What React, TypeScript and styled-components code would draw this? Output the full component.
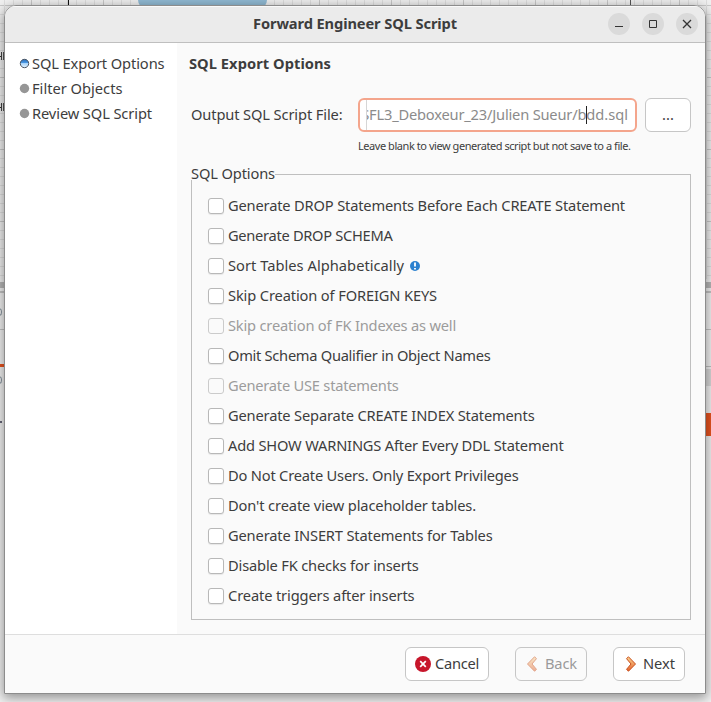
import React, { useLayoutEffect, useRef, useState } from 'react';
import styled, { createGlobalStyle, css } from 'styled-components';

const GlobalStyle = createGlobalStyle`
  * { box-sizing: border-box; }
  html, body { margin: 0; overflow: hidden; }
  body { font: 14.67px/20px "Noto Sans", "Open Sans", sans-serif; color: #3d3d3d; }
  button, input { font: inherit; color: inherit; }
`;

const Desktop = styled.div`
  position: relative;
  width: 711px;
  height: 702px;
  padding: 5px 5px 8px 4px;
  overflow: hidden;
  background:
    linear-gradient(#f2f2f2, #f2f2f2) 0 279px / 100% 423px no-repeat,
    repeating-linear-gradient(90deg, transparent 0 31px, #c9c9c9 31px 32px, transparent 32px 72px),
    repeating-linear-gradient(90deg, transparent 0 4px, #dedede 4px 5px, transparent 5px 9px),
    repeating-linear-gradient(transparent 0 5px, #c9c9c9 5px 6px, transparent 6px 72px),
    repeating-linear-gradient(transparent 0 5px, #dedede 5px 6px, transparent 6px 9px),
    #f0f0f0;
`;

/* Pieces of the diagram editor that show around the dialog. */
const Fragment = styled.div<{ $x: number; $y: number; $w: number; $h: number; $c: string }>`
  position: absolute;
  left: ${p => p.$x}px;
  top: ${p => p.$y}px;
  width: ${p => p.$w}px;
  height: ${p => p.$h}px;
  background: ${p => p.$c};
`;

const TableTop = styled.div`
  position: absolute;
  left: 138px;
  top: -9px;
  width: 129px;
  height: 18px;
  border-radius: 9px;
  background: #91bad4;
`;

const Arc = styled.div<{ $y: number }>`
  position: absolute;
  left: -4px;
  top: ${p => p.$y}px;
  width: 6px;
  height: 8px;
  border: 1.5px solid #83909b;
  border-radius: 50%;
`;

const Dialog = styled.div`
  width: 702px;
  height: 689px;
  display: flex;
  flex-direction: column;
  border: 1px solid #8c8c8c;
  border-radius: 12px 12px 0 0;
  background: #fafafa;
  overflow: hidden;
`;

const DialogShadow = styled.div`
  position: relative;
  border-radius: 12px 12px 0 0;
  box-shadow: 0 3px 12px 1px rgba(0, 0, 0, 0.4);
  width: 702px;
`;

const TitleBar = styled.header`
  flex: none;
  height: 37px;
  display: grid;
  grid-template-columns: 1fr auto 1fr;
  align-items: center;
  border-bottom: 1px solid #bfbfbf;
  box-shadow: inset 0 1px #fafafa;
  background: #ebebeb;
  font-weight: 700;
`;

const WindowControls = styled.div`
  display: flex;
  justify-content: flex-end;
  gap: 12px;
  padding-right: 7px;
`;

const ControlButton = styled.button`
  width: 22px;
  height: 22px;
  padding: 0;
  border: 0;
  border-radius: 50%;
  background: #dadada;
  svg { display: block; }
`;

const Body = styled.div`
  flex: none;
  height: 591px;
  display: flex;
`;

const Steps = styled.nav`
  width: 172px;
  padding: 8px 0 0 14px;
  background: #fff;
`;

const Step = styled.div`
  height: 25px;
  display: flex;
  align-items: center;
  gap: 2px;
  svg { flex: none; }
`;

const Page = styled.main`
  flex: 1;
  padding: 10px 14px 0 12px;
`;

const PageTitle = styled.h1`
  margin: 0;
  height: 20px;
  font-size: inherit;
  font-weight: 700;
`;

const FileRow = styled.div`
  display: flex;
  align-items: center;
  height: 34px;
  margin-top: 25px;
  padding-left: 2px;
`;

const FileLabel = styled.label`
  width: 167px;
`;

const Entry = styled.div`
  width: 279px;
  height: 34px;
  display: flex;
  align-items: center;
  border: 2px solid #f4a58c;
  border-radius: 6px;
  padding: 0 7px 0 6px;
  background: #fff;
  color: #8b8b8b;
`;

const EntryView = styled.div`
  flex: 1;
  height: 30px;
  display: flex;
  align-items: center;
  justify-content: flex-end;
  border-left: 1px solid #d6d6d6;
  overflow: hidden;
`;

const Caret = styled.i`
  flex: none;
  width: 1px;
  height: 18px;
  margin-right: -1px;
  background: #222;
`;

const Button = styled.button<{ $w: number; $off?: boolean }>`
  width: ${p => p.$w}px;
  height: 34px;
  display: flex;
  align-items: center;
  justify-content: center;
  padding: 0;
  border: 1px solid #c6c6c6;
  border-radius: 6px;
  background: ${p => (p.$off ? '#fafafa' : '#fff')};
  color: ${p => (p.$off ? '#9a9a9a' : '#3d3d3d')};
`;

const BrowseSlot = styled.div`
  margin-left: 8px;
`;

const Hint = styled.div`
  height: 16px;
  margin: 6px 0 0 169px;
  font-size: 11px;
  line-height: 16px;
`;

const Group = styled.section`
  margin: 20px 0 0 2px;
  width: 500px;
  height: 446px;
  border: 1px solid #bfbfbf;
`;

const Legend = styled.div`
  width: 84px;
  height: 16px;
  margin: -11px 0 0 -1px;
  line-height: 18px;
  background: #fafafa;
`;

const Options = styled.div`
  padding: 11px 0 0 16px;
`;

const Option = styled.label<{ $off?: boolean }>`
  height: 30px;
  display: flex;
  align-items: center;
  gap: 4px;
  color: ${p => (p.$off ? '#9c9c9c' : '#3d3d3d')};
`;

const Box = styled.span<{ $off?: boolean }>`
  width: 16px;
  height: 16px;
  border: 1px solid #b8b8b8;
  border-radius: 3px;
  background: #fff;
  box-shadow: 0 1px 1px rgba(0, 0, 0, 0.08);
  ${p => p.$off && css`
    border-color: #cbcbcb;
    background: #fafafa;
    box-shadow: none;
  `}
`;

const InfoSlot = styled.span`
  display: flex;
  margin-left: 2px;
`;

const Footer = styled.footer`
  flex: 1;
  display: flex;
  justify-content: flex-end;
  border-top: 1px solid #dedede;
  padding: 12px 20px 0 0;
  gap: 26px;
`;

const IconSlot = styled.span<{ $gap: number }>`
  display: flex;
  margin-right: ${p => p.$gap}px;
`;

const Run = styled.span`
  display: inline-block;
  flex: none;
  padding-bottom: 2px;
  white-space: pre;
`;

/* Tracks the text so that it takes exactly the given width. */
function Text({ width, children }: { width: number; children: string }) {
  const ref = useRef<HTMLSpanElement>(null);
  const [tracking, setTracking] = useState(0);
  useLayoutEffect(() => {
    if (!ref.current) return;
    const range = document.createRange();
    range.selectNodeContents(ref.current);
    const extra = width - range.getBoundingClientRect().width;
    if (Math.abs(extra) > 0.3) setTracking(t => t + extra / children.length);
  }, [width, children]);
  return <Run ref={ref} style={{ letterSpacing: tracking }}>{children}</Run>;
}

const steps = [
  { label: 'SQL Export Options', width: 132.5, active: true },
  { label: 'Filter Objects', width: 90.5 },
  { label: 'Review SQL Script', width: 120 },
];

const options = [
  { label: 'Generate DROP Statements Before Each CREATE Statement', width: 397 },
  { label: 'Generate DROP SCHEMA', width: 164.5 },
  { label: 'Sort Tables Alphabetically', width: 176, info: true },
  { label: 'Skip Creation of FOREIGN KEYS', width: 209 },
  { label: 'Skip creation of FK Indexes as well', width: 228, off: true },
  { label: 'Omit Schema Qualifier in Object Names', width: 262.5 },
  { label: 'Generate USE statements', width: 170.5, off: true },
  { label: 'Generate Separate CREATE INDEX Statements', width: 306.5 },
  { label: 'Add SHOW WARNINGS After Every DDL Statement', width: 335.5 },
  { label: 'Do Not Create Users. Only Export Privileges', width: 290.5 },
  { label: "Don't create view placeholder tables.", width: 248 },
  { label: 'Generate INSERT Statements for Tables', width: 264.5 },
  { label: 'Disable FK checks for inserts', width: 190.5 },
  { label: 'Create triggers after inserts', width: 186.5 },
];

const StepDot = ({ active }: { active?: boolean }) => (
  <svg width="11" height="12" viewBox="0 0 11 12">
    <defs>
      <linearGradient id="dot" x2="0" y2="1">
        <stop offset="0" stopColor="#2b6cb5" />
        <stop offset=".45" stopColor="#4b9be8" />
        <stop offset=".5" stopColor="#a9d4fa" />
        <stop offset="1" stopColor="#e6f4ff" />
      </linearGradient>
    </defs>
    {active
      ? <circle cx="5.5" cy="5.5" r="4.2" fill="url(#dot)" stroke="#4b5563" />
      : <circle cx="5.5" cy="5.5" r="4.7" fill="#969696" />}
  </svg>
);

const Chevron = ({ back }: { back?: boolean }) => (
  <svg width="16" height="16" viewBox="0 0 16 16" opacity={back ? 0.5 : 1}>
    <defs>
      <linearGradient id="chev" x2="0" y2="1">
        <stop offset="0" stopColor="#fbd592" />
        <stop offset="1" stopColor="#e2622c" />
      </linearGradient>
    </defs>
    <path
      d={back ? 'M9.5.8 2.5 8l7 7.2 2-1.8L7 8l4.5-5.4z' : 'M5.5.8 12.5 8l-7 7.2-2-1.8L8 8 3.5 2.6z'}
      fill="url(#chev)" stroke="#c8501f" strokeLinejoin="round"
    />
  </svg>
);

export default function App() {
  return (
    <>
      <GlobalStyle />
      <Desktop>
        <TableTop />
        <Fragment $x={68} $y={0} $w={1} $h={6} $c="#111" />
        <Fragment $x={630} $y={0} $w={1} $h={6} $c="#555" />
        {[52, 103].map(y => (
          <React.Fragment key={y}>
            <Fragment $x={0} $y={y + 4} $w={2} $h={1} $c="#333" />
            <Fragment $x={1} $y={y} $w={1} $h={8} $c="#444" />
            <Fragment $x={3} $y={y} $w={2} $h={8} $c="#555" />
          </React.Fragment>
        ))}
        <Fragment $x={0} $y={282} $w={711} $h={6} $c="#b8b8b8" />
        <Fragment $x={0} $y={291} $w={711} $h={2} $c="#c4c4c4" />
        <Fragment $x={0} $y={329} $w={711} $h={1} $c="#c4c4c4" />
        <Fragment $x={0} $y={364} $w={5} $h={3} $c="#e95420" />
        <Fragment $x={705} $y={366} $w={6} $h={1} $c="#c0c0c0" />
        <Fragment $x={705} $y={369} $w={6} $h={17} $c="#d8d8d8" />
        <Fragment $x={705} $y={413} $w={6} $h={23} $c="#e95420" />
        <Arc $y={308} />
        <Arc $y={376} />
        <Fragment $x={0} $y={421} $w={2} $h={2} $c="#667" />
        <DialogShadow>
          <Dialog>
            <TitleBar>
              <span />
              <Text width={204}>Forward Engineer SQL Script</Text>
              <WindowControls>
                <ControlButton aria-label="Minimize">
                  <svg width="22" height="22"><path d="M7 13.5h8" stroke="#333" /></svg>
                </ControlButton>
                <ControlButton aria-label="Maximize">
                  <svg width="22" height="22"><path d="M7.5 7.5h7v7h-7z" fill="none" stroke="#333" /></svg>
                </ControlButton>
                <ControlButton aria-label="Close">
                  <svg width="22" height="22"><path d="m7 7 8 8m0-8-8 8" stroke="#333" strokeWidth="1.3" /></svg>
                </ControlButton>
              </WindowControls>
            </TitleBar>
            <Body>
              <Steps>
                {steps.map(s => (
                  <Step key={s.label}>
                    <StepDot active={s.active} />
                    <Text width={s.width}>{s.label}</Text>
                  </Step>
                ))}
              </Steps>
              <Page>
                <PageTitle><Text width={142}>SQL Export Options</Text></PageTitle>
                <FileRow>
                  <FileLabel><Text width={151.5}>Output SQL Script File:</Text></FileLabel>
                  <Entry>
                    <EntryView>
                      <Text width={225}>SFL3_Deboxeur_23/Julien Sueur/b</Text>
                      <Caret />
                      <Text width={42}>dd.sql</Text>
                    </EntryView>
                  </Entry>
                  <BrowseSlot>
                    <Button $w={46}><Text width={12}>...</Text></Button>
                  </BrowseSlot>
                </FileRow>
                <Hint><Text width={272.5}>Leave blank to view generated script but not save to a file.</Text></Hint>
                <Group>
                  <Legend><Text width={84}>SQL Options</Text></Legend>
                  <Options>
                    {options.map(o => (
                      <Option key={o.label} $off={o.off}>
                        <Box $off={o.off} />
                        <Text width={o.width}>{o.label}</Text>
                        {o.info && (
                          <InfoSlot>
                            <svg width="10" height="10" viewBox="0 0 10 10">
                              <circle cx="5" cy="5" r="5" fill="#2a80cf" />
                              <path d="M5 1.5v4M5 7v1.5" stroke="#fff" strokeWidth="1.8" />
                            </svg>
                          </InfoSlot>
                        )}
                      </Option>
                    ))}
                  </Options>
                </Group>
              </Page>
            </Body>
            <Footer>
              <Button $w={84}>
                <IconSlot $gap={4}>
                  <svg width="16" height="16" viewBox="0 0 16 16">
                    <circle cx="8" cy="8" r="8" fill="#c7162b" />
                    <path d="m5.2 5.2 5.6 5.6m0-5.6-5.6 5.6" stroke="#fff" strokeWidth="1.7" />
                  </svg>
                </IconSlot>
                <Text width={44}>Cancel</Text>
              </Button>
              <Button $w={72} $off>
                <IconSlot $gap={4}><Chevron back /></IconSlot>
                <Text width={32}>Back</Text>
              </Button>
              <Button $w={72}>
                <IconSlot $gap={4}><Chevron /></IconSlot>
                <Text width={32}>Next</Text>
              </Button>
            </Footer>
          </Dialog>
        </DialogShadow>
      </Desktop>
    </>
  );
}
